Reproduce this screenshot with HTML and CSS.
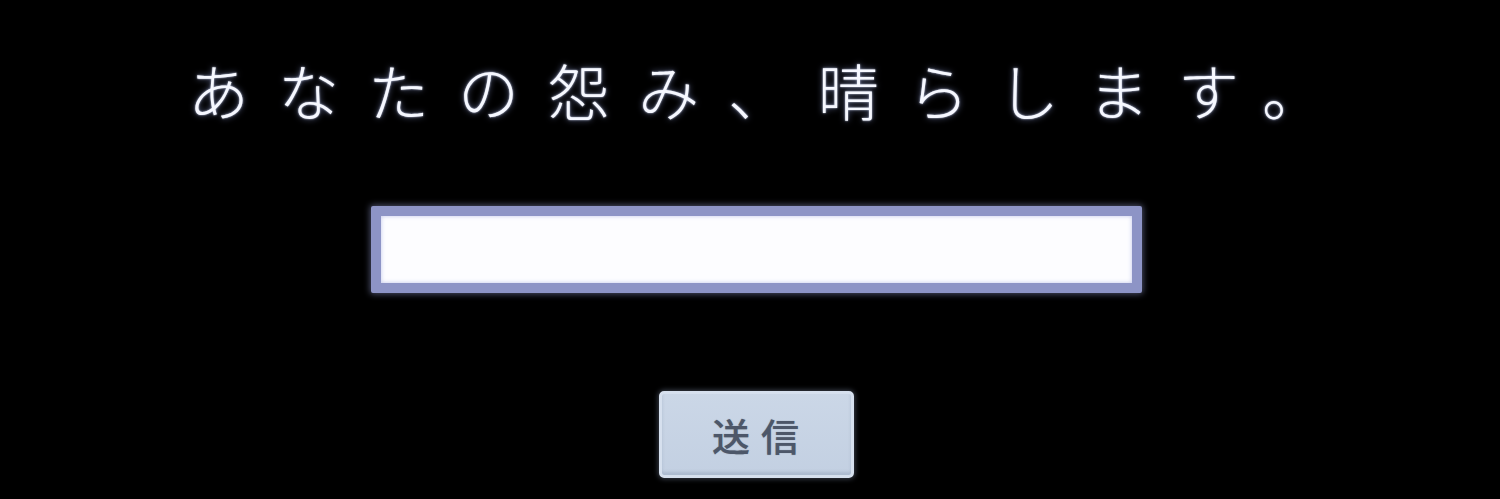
FILE: index.html
```html
<!DOCTYPE html>
<html lang="ja">
<head>
<meta charset="utf-8">
<title>送信フォーム</title>
<link rel="stylesheet" href="styles.css">
</head>
<body>
  <main class="page">
    <h1 class="headline">あなたの怨み、晴らします。</h1>
    <form class="form">
      <input class="field" type="text" aria-label="入力">
      <button class="submit" type="button">送信</button>
    </form>
  </main>
</body>
</html>
```
FILE: styles.css
```css
html, body {
  margin: 0;
  padding: 0;
  background: #000;
  height: 100%;
}

.page {
  display: flex;
  flex-direction: column;
  align-items: center;
  height: 499px;
  overflow: hidden;
  font-family: "Noto Sans CJK JP", "Noto Sans", sans-serif;
}

.headline {
  margin: 55px 0 0 40px;
  font-size: 61px;
  line-height: 70px;
  font-weight: 300;
  letter-spacing: 29px;
  color: #f6f8ff;
  text-shadow: 0 0 2px rgba(225, 232, 255, 0.95), 0 0 6px rgba(170, 185, 255, 0.55);
  white-space: nowrap;
}

.form {
  display: flex;
  flex-direction: column;
  align-items: center;
  gap: 98px;
  margin: 81px 0 0 12px;
}

.field {
  box-sizing: border-box;
  width: 771px;
  height: 87px;
  margin: 0;
  padding: 0 16px;
  border: 10px solid #8d94c6;
  border-radius: 2px;
  background: #fdfdff;
  box-shadow: 0 0 6px 1px rgba(170, 180, 240, 0.45), inset 0 0 4px rgba(150, 160, 220, 0.6);
  outline: none;
  font-size: 28px;
}

.submit {
  box-sizing: border-box;
  width: 195px;
  height: 87px;
  margin: 0;
  padding: 0 0 0 10px;
  border: 3px solid #d6e0ee;
  border-radius: 5px;
  background: linear-gradient(#cbd7e7, #c3d0e2);
  box-shadow: 0 0 5px 1px rgba(170, 185, 220, 0.35), inset 0 -3px 3px rgba(150, 165, 190, 0.5);
  color: #4d5769;
  font-family: "Noto Sans CJK JP", "Noto Sans", sans-serif;
  font-size: 38px;
  font-weight: 500;
  letter-spacing: 11px;
  line-height: 1;
  text-shadow: 0 0 1px rgba(77, 87, 105, 0.6);
}
```
